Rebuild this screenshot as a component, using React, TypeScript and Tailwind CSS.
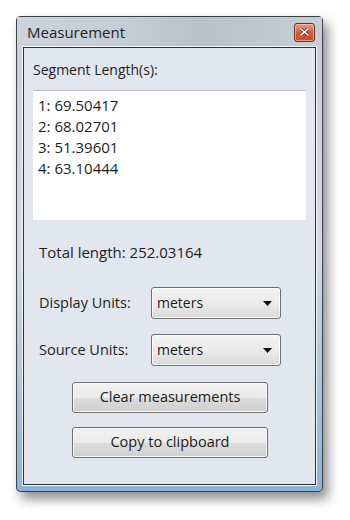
import React from "react";

const font = { fontFamily: '"Open Sans", "Noto Sans", sans-serif' };

function Combo({ value }: { value: string }) {
  return (
    <div className="flex h-[32px] w-[130px] items-center justify-between rounded-[3px] border border-[#707070] bg-gradient-to-b from-[#f3f3f3] via-[#ebebeb] to-[#d9d9d9] pl-[5px] pr-[8px] shadow-[inset_0_0_0_1px_#fcfcfc]">
      <span className="text-[14px] leading-none text-[#1a1a1a]">{value}</span>
      <svg width="9" height="5" viewBox="0 0 9 5">
        <path d="M0 0 H9 L4.5 5 Z" fill="#111" />
      </svg>
    </div>
  );
}

function Btn({ label }: { label: string }) {
  return (
    <div className="flex h-[31px] w-[196px] items-center justify-center rounded-[3px] border border-[#707070] bg-[linear-gradient(#f2f2f2_0%,#ebebeb_50%,#dddddd_50%,#cfcfcf_100%)] shadow-[inset_0_0_0_1px_#fbfbfb]">
      <span className="text-[14.5px] leading-none text-[#1a1a1a]">{label}</span>
    </div>
  );
}

export default function App() {
  return (
    <div className="h-[520px] w-[350px] bg-white pl-[16px] pt-[16px]" style={font}>
      <div className="flex h-[476px] w-[307px] flex-col rounded-[4px] border border-[#3c3f44] bg-gradient-to-b from-[#c8cfd7] via-[#d5dbe2] to-[#8eb2d6] shadow-[5px_7px_12px_rgba(0,0,0,0.45)]">
        {/* title bar */}
        <div className="flex h-[30px] items-center justify-between pl-[10px] pr-[7px] bg-[linear-gradient(90deg,#cdd3da_0%,#c4cbd3_40%,#b8c0c9_60%,#c7ced6_100%)]">
          <span className="text-[15px] text-[#1e1e1e]">Measurement</span>
          <div className="flex h-[19px] w-[21px] items-center justify-center rounded-[3px] border border-[#5e342b] bg-gradient-to-b from-[#ec9b84] via-[#d9583a] to-[#c94a2c] shadow-[inset_0_0_0_1px_rgba(255,210,190,0.6)]">
            <svg width="9" height="8" viewBox="0 0 9 8">
              <path d="M1 1 L8 7 M8 1 L1 7" stroke="#4a2a24" strokeWidth="3" strokeLinecap="square" />
              <path d="M1 1 L8 7 M8 1 L1 7" stroke="#ffffff" strokeWidth="1.6" strokeLinecap="square" />
            </svg>
          </div>
        </div>
        {/* client */}
        <div className="mx-[6px] mb-[6px] flex-1 border border-[#2f3338] shadow-[0_0_0_1px_#f4f6f9]">
          <div className="flex h-full flex-col bg-[#e2e6ee] text-[#1e1e1e]">
            <div className="ml-[9px] mt-[12px] h-[20px] text-[14px] leading-[20px]">Segment Length(s):</div>
            <div className="ml-[9px] mt-[10px] h-[130px] w-[273px] border-t border-[#b9bcc2] bg-white pl-[5px] pt-[4px] text-[15px] leading-[21px]">
              <div>1: 69.50417</div>
              <div>2: 68.02701</div>
              <div>3: 51.39601</div>
              <div>4: 63.10444</div>
            </div>
            <div className="ml-[15px] mt-[22px] h-[20px] text-[15px] leading-[20px]">Total length: 252.03164</div>
            <div className="ml-[15px] mt-[25px] flex items-center">
              <span className="w-[112px] text-[14.5px]">Display Units:</span>
              <Combo value="meters" />
            </div>
            <div className="ml-[15px] mt-[15px] flex items-center">
              <span className="w-[112px] text-[14.5px]">Source Units:</span>
              <Combo value="meters" />
            </div>
            <div className="ml-[48px] mt-[16px] flex flex-col gap-[14px]">
              <Btn label="Clear measurements" />
              <Btn label="Copy to clipboard" />
            </div>
          </div>
        </div>
      </div>
    </div>
  );
}
